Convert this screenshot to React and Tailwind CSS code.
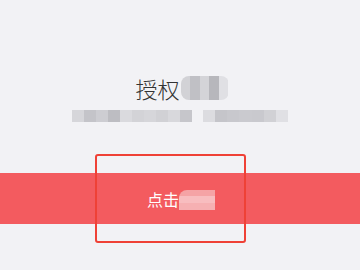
import React from 'react';

const titleBlur = ['#d2d2d6', '#c0c0c5', '#d4d4d8', '#b7b7bc', '#e0e0e4'];
const subBlurA = ['#d6d6da', '#c4c4c9', '#cdcdd2', '#bdbdc2', '#dadade', '#d3d3d7', '#d6d6da', '#d1d1d5', '#d8d8dc', '#c6c6cb'];
const subBlurB = ['#dcdce0', '#c5c5ca', '#c8c8cd', '#cacacf', '#c9c9ce', '#d1d1d5', '#e0e0e4'];

const App = () => {
  return (
    <div className="relative w-[360px] h-[270px] overflow-hidden bg-[#f2f2f5]" style={{ fontFamily: '"Noto Sans CJK SC", "Noto Sans", sans-serif' }}>
      <div className="flex flex-col items-center pt-[72px]">
        {/* title */}
        <div className="flex items-center h-[32px] ml-[4px]">
          <span className="text-[22px] leading-none font-light text-[#333333]">授权</span>
          <div className="flex h-[24px] w-[48px] rounded-[8px] overflow-hidden ml-[1px]">
            {titleBlur.map((c, i) => (
              <div key={i} className="flex-1" style={{ backgroundColor: c }} />
            ))}
          </div>
        </div>

        {/* subtitle */}
        <div className="flex items-start mt-[6px] h-[18px]">
          <div className="flex h-[12px] w-[120px]">
            {subBlurA.map((c, i) => (
              <div key={i} className="flex-1" style={{ backgroundColor: c }} />
            ))}
          </div>
          <div className="w-[11px]" />
          <div className="flex h-[12px] w-[85px]">
            {subBlurB.map((c, i) => (
              <div key={i} className="flex-1" style={{ backgroundColor: c }} />
            ))}
          </div>
        </div>
      </div>

      {/* button bar */}
      <div className="mt-[45px] h-[51px] w-full bg-[#f35b5f] flex items-center justify-center">
        <div className="flex items-center ml-[2px]">
          <span className="text-[16px] leading-none text-white">点击</span>
          <div className="flex flex-col h-[20px] w-[36px] rounded-tl-[8px] overflow-hidden mt-[2px]">
            <div className="flex-1 bg-[#f5a3a5]" />
            <div className="flex-1 bg-[#f8bdbf]" />
            <div className="flex-1 bg-[#f6b0b2]" />
          </div>
        </div>
      </div>

      {/* annotation frame */}
      <div className="absolute left-[95px] top-[154px] w-[151px] h-[89px] border-2 border-[#ef4136] rounded-[3px]" />
    </div>
  );
};

export default App;
